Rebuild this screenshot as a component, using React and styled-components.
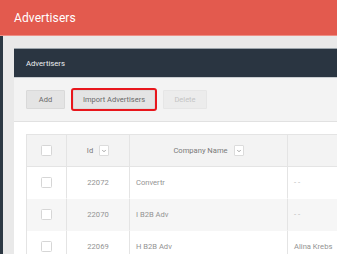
import React from 'react';
import styled, { createGlobalStyle } from 'styled-components';
import { ChevronDown } from 'lucide-react';

const GlobalStyle = createGlobalStyle`
  html, body {
    margin: 0;
    padding: 0;
    overflow: hidden;
    background: #e9e9e9;
    font-family: Roboto, "Liberation Sans", Arial, sans-serif;
  }
`;

const Page = styled.div`
  width: 337px;
  height: 254px;
  display: flex;
  flex-direction: column;
  overflow: hidden;
`;

const TopBar = styled.header`
  height: 35px;
  flex: none;
  display: flex;
  align-items: center;
  padding-left: 14px;
  background: #e35a4e;
  border-bottom: 1px solid #ee8f86;
  color: #fff;
  font-size: 12px;
  letter-spacing: 0.1px;
`;

const Main = styled.div`
  flex: 1;
  display: flex;
  border-left: 3px solid #2c3843;
  padding: 12px 0 0 11px;
  background: #e9e9e9;
`;

const Panel = styled.section`
  width: 600px;
  flex: none;
  display: flex;
  flex-direction: column;
  background: #fff;
`;

const PanelHead = styled.div`
  height: 28px;
  display: flex;
  align-items: center;
  padding-left: 12px;
  background: #2a3541;
  border-top: 1px solid #9ba4ab;
  border-bottom: 1px solid #c9cdd1;
  color: #eef0f2;
  font-size: 7.7px;
`;

const Toolbar = styled.div`
  display: flex;
  gap: 8px;
  padding: 12px;
  background: #f3f3f3;
  border-bottom: 1px solid #e1e1e1;
`;

const Button = styled.button`
  height: 19px;
  width: ${p => p.$w}px;
  padding: 0;
  box-sizing: border-box;
  border: 1px solid ${p => (p.disabled ? '#e6e6e6' : '#d9d9d9')};
  border-radius: 1px;
  background: ${p => (p.disabled ? '#ececec' : '#e4e4e4')};
  color: ${p => (p.disabled ? '#c4c4c4' : '#6a6a6a')};
  font-family: inherit;
  font-size: 7.5px;
  outline: ${p => (p.$marked ? '2px solid #e8161c' : 'none')};
  outline-offset: 0;
`;

const Body = styled.div`
  padding: 12px 0 0 12px;
`;

const Grid = styled.div`
  display: grid;
  grid-template-columns: 40px 63px 158px 220px;
  grid-auto-rows: 32px;
  border-top: 1px solid #e4e4e4;
  border-left: 1px solid #e4e4e4;
`;

const Cell = styled.div`
  display: flex;
  align-items: center;
  justify-content: ${p => p.$align || 'center'};
  gap: 6px;
  padding: 0 ${p => (p.$align ? '6px' : '0')};
  background: ${p => p.$bg || '#fff'};
  border-right: 1px solid #e4e4e4;
  border-bottom: 1px solid ${p => p.$line || 'transparent'};
  color: ${p => p.$color || (p.$head ? '#7a7a7a' : '#939393')};
  font-size: 7.6px;
  white-space: nowrap;
`;

const Check = styled.span`
  width: 9px;
  height: 9px;
  border: 1px solid #d6d6d6;
  border-radius: 1.5px;
  background: #fff;
`;

const SortBox = styled.span`
  width: 8px;
  height: 9px;
  display: inline-flex;
  align-items: center;
  justify-content: center;
  border: 1px solid #dcdcdc;
  border-radius: 1px;
  background: #fff;
  color: #888;
`;

const rows = [
  { id: '22072', name: 'Convertr', contact: '- -' },
  { id: '22070', name: 'I B2B Adv', contact: '- -' },
  { id: '22069', name: 'H B2B Adv', contact: 'Alina Krebs' },
];

const Sort = () => (
  <SortBox>
    <ChevronDown size={6} strokeWidth={3} />
  </SortBox>
);

export default function App() {
  return (
    <Page>
      <GlobalStyle />
      <TopBar>Advertisers</TopBar>
      <Main>
        <Panel>
          <PanelHead>Advertisers</PanelHead>
          <Toolbar>
            <Button $w={39}>Add</Button>
            <Button $w={82} $marked>Import Advertisers</Button>
            <Button $w={44} disabled>Delete</Button>
          </Toolbar>
          <Body>
            <Grid>
              <Cell $head $bg="#f3f3f3" $line="#e4e4e4"><Check /></Cell>
              <Cell $head $bg="#f3f3f3" $line="#e4e4e4">Id <Sort /></Cell>
              <Cell $head $bg="#f3f3f3" $line="#e4e4e4">Company Name <Sort /></Cell>
              <Cell $head $bg="#f3f3f3" $line="#e4e4e4" />
              {rows.map((r, i) => {
                const bg = i % 2 ? '#f6f6f6' : '#fff';
                const empty = r.contact === '- -';
                return (
                  <React.Fragment key={r.id}>
                    <Cell $bg={bg}><Check /></Cell>
                    <Cell $bg={bg}>{r.id}</Cell>
                    <Cell $bg={bg} $align="flex-start">{r.name}</Cell>
                    <Cell $bg={bg} $align="flex-start" $color={empty ? '#b8b8b8' : undefined}>
                      {r.contact}
                    </Cell>
                  </React.Fragment>
                );
              })}
            </Grid>
          </Body>
        </Panel>
      </Main>
    </Page>
  );
}
